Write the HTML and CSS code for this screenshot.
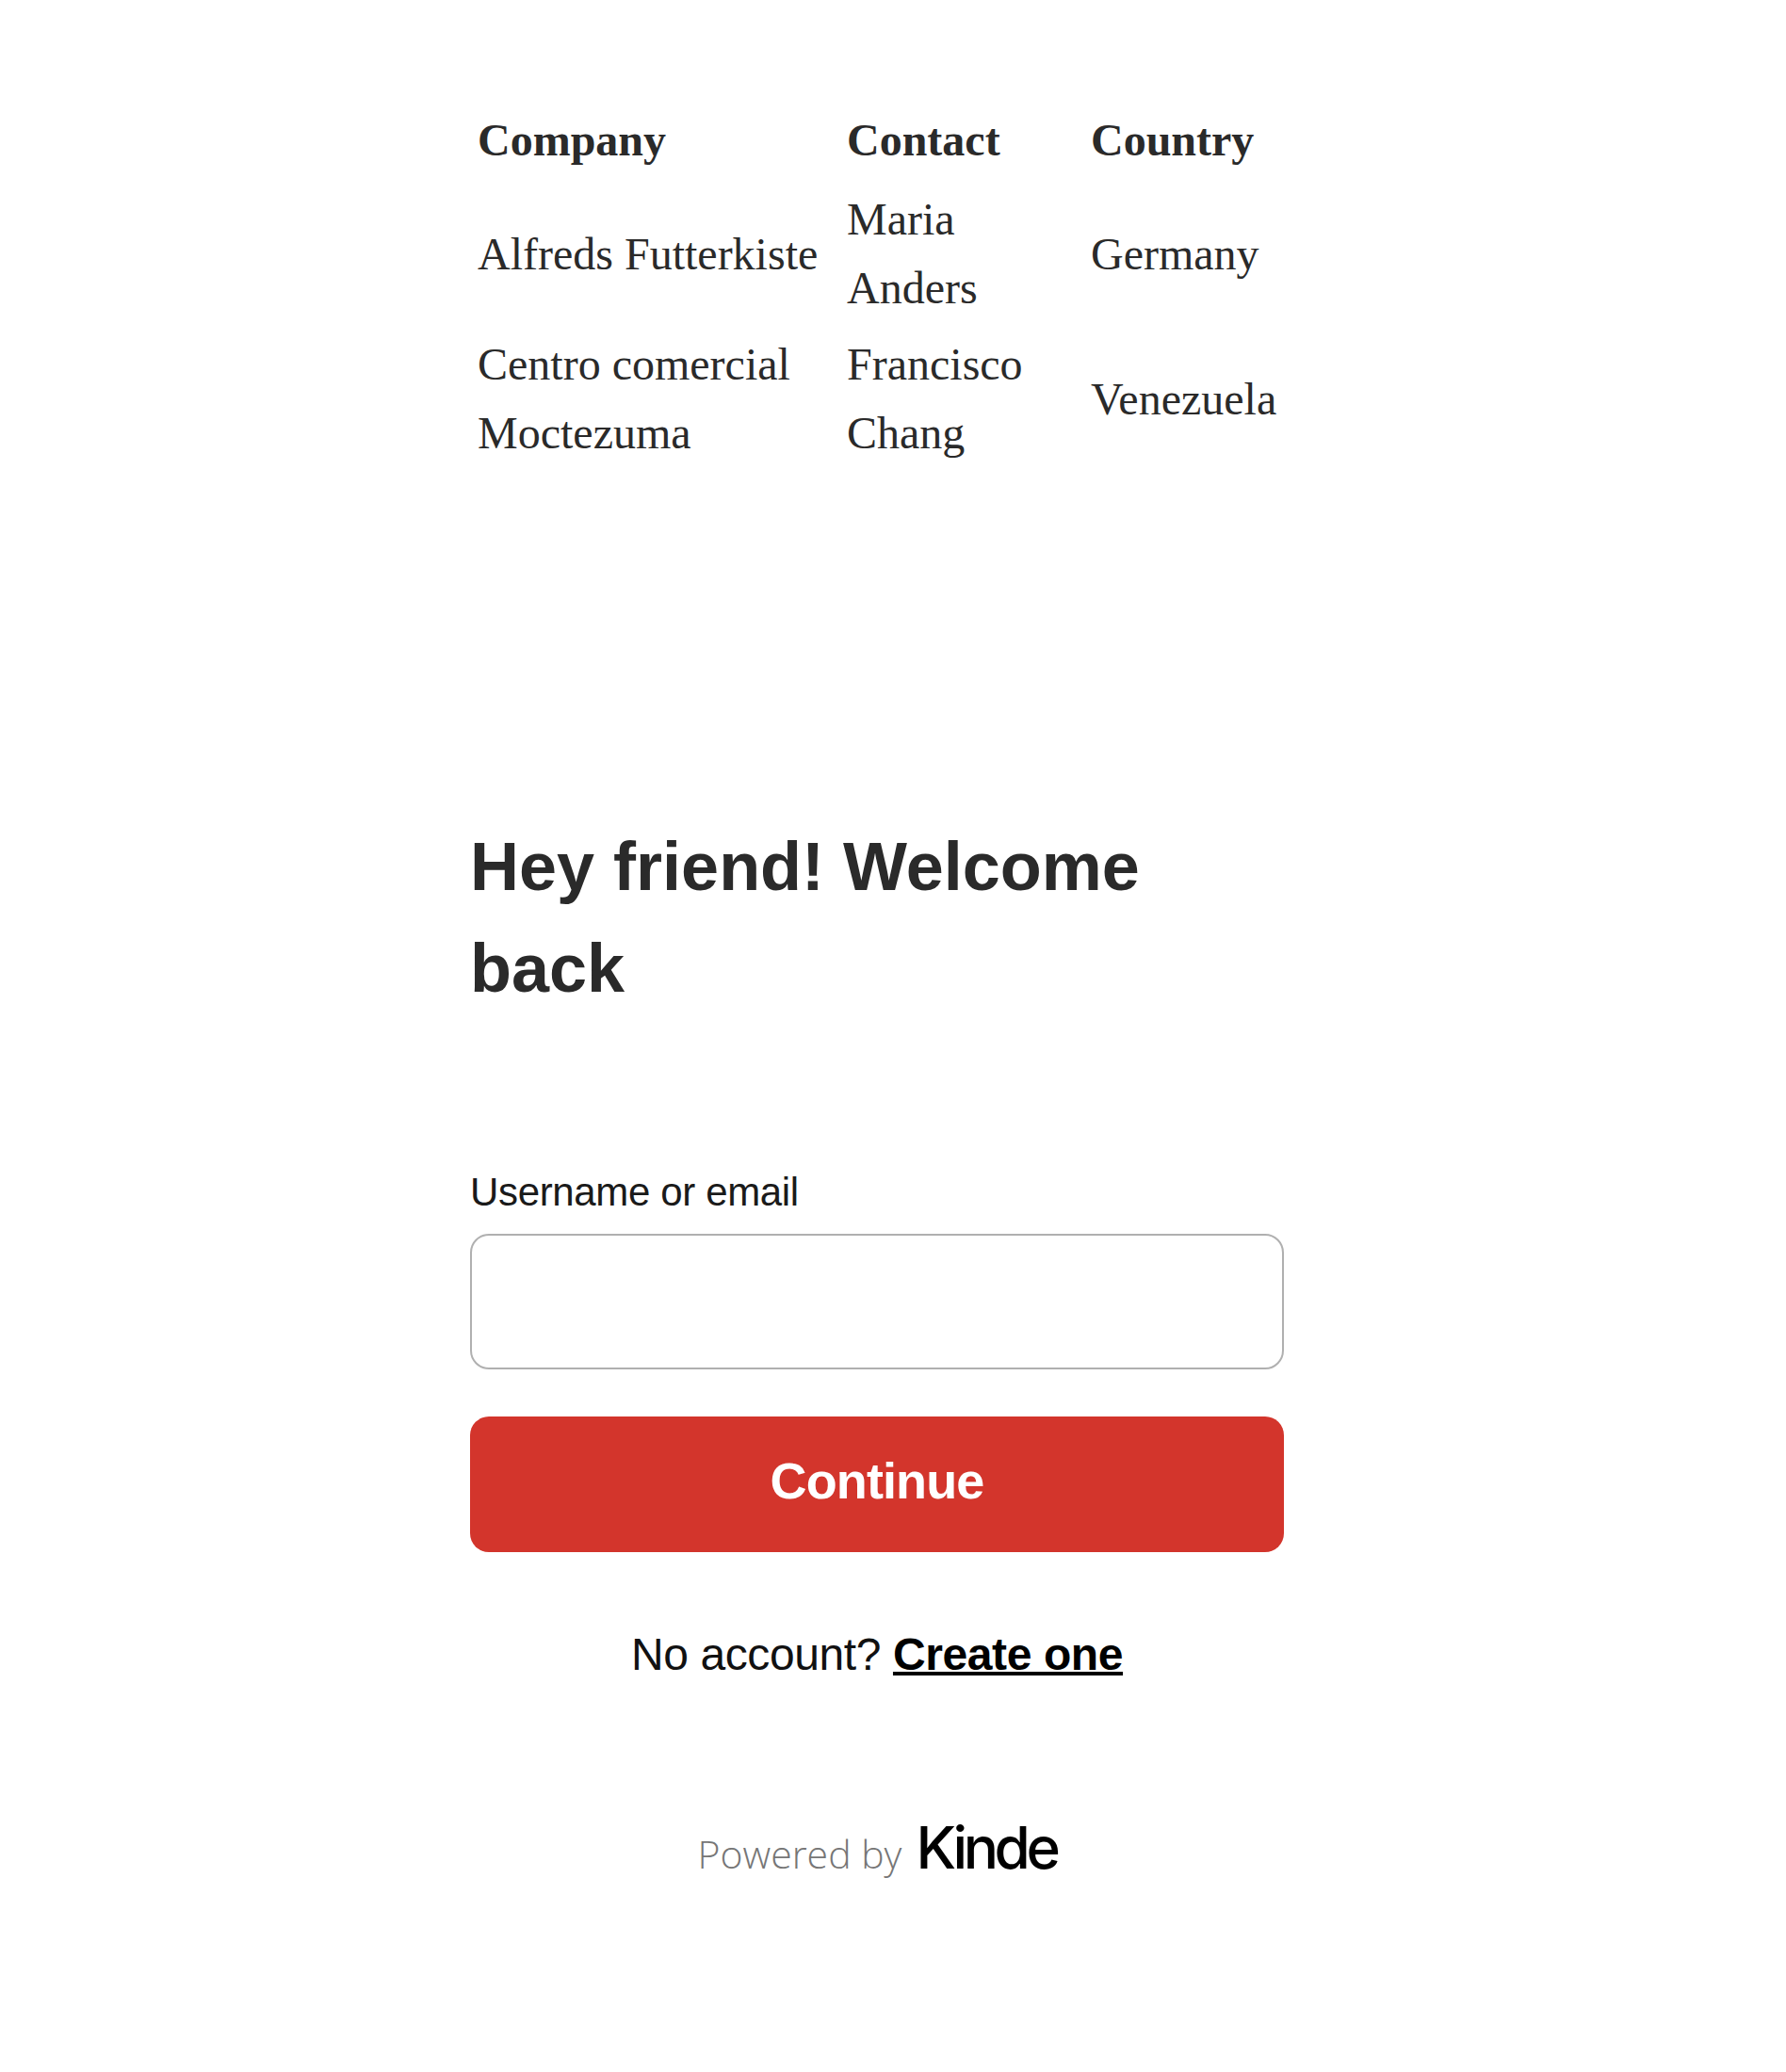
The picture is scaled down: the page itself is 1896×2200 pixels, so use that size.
FILE: index.html
```html
<!DOCTYPE html>
<html lang="en">
<head>
    <meta charset="UTF-8">
    <title>Sign in</title>
    <link rel="stylesheet" href="styles.css">
</head>
<body>
    <main class="page">
        <table class="customers">
            <colgroup>
                <col class="col-company">
                <col class="col-contact">
                <col class="col-country">
            </colgroup>
            <thead>
                <tr><th>Company</th><th>Contact</th><th>Country</th></tr>
            </thead>
            <tbody>
                <tr><td>Alfreds Futterkiste</td><td>Maria Anders</td><td>Germany</td></tr>
                <tr><td>Centro comercial Moctezuma</td><td>Francisco Chang</td><td>Venezuela</td></tr>
            </tbody>
        </table>

        <h1 class="welcome">Hey friend! Welcome back</h1>

        <form class="login" onsubmit="return false">
            <label class="login-label" for="username">Username or email</label>
            <input class="login-input" id="username" type="text">
            <button class="login-button" type="submit">Continue</button>
        </form>

        <p class="signup">No account? <a href="#">Create one</a></p>

        <div class="powered">
            <span class="powered-text">Powered by</span>
            <span class="powered-logo">Kinde</span>
        </div>
    </main>
</body>
</html>
```

FILE: styles.css
```css
body {
    margin: 0;
    background: #fff;
    color: #2a2a2a;
    font-family: "Liberation Sans", Arial, sans-serif;
}
.page {
    width: 864px;
    margin: 0 0 0 499px;
    padding-top: 108px;
}

.customers {
    width: 864px;
    table-layout: fixed;
    border-collapse: collapse;
    font-family: "Liberation Serif", "Times New Roman", serif;
    font-size: 48px;
    line-height: 73px;
}
.col-company { width: 392px; }
.col-contact { width: 259px; }
.col-country { width: 213px; }
.customers th, .customers td {
    padding: 4px 0 4px 8px;
    text-align: left;
    vertical-align: middle;
}
.customers th { padding-bottom: 7px; }

.welcome {
    margin: 366px 0 0;
    font-size: 72px;
    line-height: 108px;
    font-weight: 700;
    color: #2a2a2a;
}

.login { margin-top: 152px; }
.login-label {
    display: block;
    font-size: 42px;
    line-height: 63px;
    letter-spacing: -0.35px;
    color: #1a1a1a;
}
.login-input {
    display: block;
    box-sizing: border-box;
    width: 100%;
    height: 144px;
    margin-top: 13px;
    border: 2px solid #b0b0b0;
    border-radius: 20px;
    background: #fff;
    outline: none;
}
.login-button {
    display: block;
    width: 100%;
    height: 144px;
    margin-top: 50px;
    padding-bottom: 9px;
    border: 0;
    border-radius: 20px;
    background: #d3352c;
    color: #fff;
    font-family: inherit;
    font-size: 54px;
    letter-spacing: -0.9px;
    font-weight: 700;
}

.signup {
    margin: 81px 0 0;
    font-size: 48px;
    line-height: 56px;
    letter-spacing: -0.4px;
    text-align: center;
    color: #111;
}
.signup a {
    color: #000;
    font-weight: 700;
    text-decoration-thickness: 4px;
}

.powered {
    display: flex;
    justify-content: center;
    align-items: baseline;
    gap: 15px;
    margin-top: 139px;
}
.powered-text {
    font-family: "Open Sans", sans-serif;
    font-size: 41px;
    font-weight: 300;
    color: #767676;
}
.powered-logo {
    font-family: Inter, sans-serif;
    font-size: 62px;
    font-weight: 500;
    letter-spacing: -4.4px;
    color: #000;
}
```
